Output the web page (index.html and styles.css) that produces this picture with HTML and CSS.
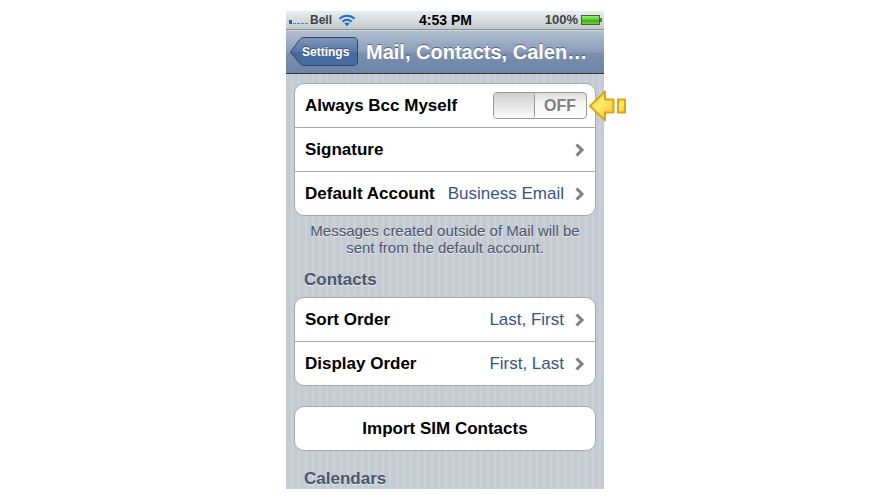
FILE: index.html
```
<!DOCTYPE html>
<html lang="en">
<head>
    <meta charset="UTF-8">
    <meta name="viewport" content="width=device-width, initial-scale=1.0">
    <title>Mail, Contacts, Calendars</title>
    <link rel="stylesheet" href="styles.css">
</head>
<body>
    <div class="phone">
        <div class="status-bar">
            <div class="carrier">
                <svg class="signal" width="20" height="6" viewBox="0 0 20 6">
                    <rect x="0" y="1" width="3" height="4" fill="#1c66c4"/>
                    <path d="M4 4.500h3M8 4.500h3M12 4.500h3M16 4.500h3" stroke="#4a86cc" stroke-width="1"/>
                </svg>
                <span>Bell</span>
                <svg class="wifi" width="18" height="13" viewBox="0 0 18 13" fill="none" stroke="#1b6fd0" stroke-width="2">
                    <path d="M1.500 4.800C5.500 0.600 12.500 0.600 16.500 4.800"/>
                    <path d="M4.500 7.700C7 5.200 11 5.200 13.500 7.700"/>
                    <path d="M6.500 9.500C8 8.300 10 8.300 11.500 9.500L9 12.200Z" fill="#1b6fd0" stroke="none"/>
                </svg>
            </div>
            <time class="clock">4:53 PM</time>
            <div class="battery">
                <span>100%</span>
                <svg width="21" height="10" viewBox="0 0 21 10">
                    <defs>
                        <linearGradient id="charge" x1="0" y1="0" x2="0" y2="1">
                            <stop offset="0" stop-color="#a5ea7c"/>
                            <stop offset="0.45" stop-color="#62d033"/>
                            <stop offset="0.5" stop-color="#38ae12"/>
                            <stop offset="1" stop-color="#6cd335"/>
                        </linearGradient>
                    </defs>
                    <rect x="0.500" y="0.500" width="18" height="9" fill="url(#charge)" stroke="#47643f"/>
                    <rect x="19" y="3" width="2" height="4" fill="#667066"/>
                </svg>
            </div>
        </div>

        <header class="nav-bar">
            <a class="back" href="#settings">
                <svg width="68" height="30" viewBox="0 0 68 30">
                    <defs>
                        <linearGradient id="back-fill" x1="0" y1="0" x2="0" y2="1">
                            <stop offset="0" stop-color="#8298bb"/>
                            <stop offset="0.5" stop-color="#5577a7"/>
                            <stop offset="0.52" stop-color="#446a9f"/>
                            <stop offset="1" stop-color="#4a6d9f"/>
                        </linearGradient>
                    </defs>
                    <path d="M0.500 15L9.500 3Q11.500 0.500 14 0.500H63Q67.500 0.500 67.500 5V24Q67.500 28.500 63 28.500H14Q11.500 28.500 9.500 26Z" fill="url(#back-fill)" stroke="#2e466d"/>
                </svg>
                <span>Settings</span>
            </a>
            <h1>Mail, Contacts, Calen…</h1>
        </header>

        <main>
            <ul class="group">
                <li class="row">
                    <label for="bcc">Always Bcc Myself</label>
                    <label class="switch">
                        <input type="checkbox" id="bcc">
                        <span>OFF</span>
                    </label>
                    <svg class="pointer" width="40" height="34" viewBox="0 0 40 34">
                        <defs>
                            <linearGradient id="gold" x1="0" y1="0" x2="1" y2="1">
                                <stop offset="0" stop-color="#ffce1a"/>
                                <stop offset="0.45" stop-color="#ffec70"/>
                                <stop offset="1" stop-color="#f5b911"/>
                            </linearGradient>
                        </defs>
                        <path d="M2 17L17 2.500V10.500H25.500V23.500H17V31.500Z" fill="url(#gold)" stroke="#dca514" stroke-width="2" stroke-linejoin="round"/>
                        <rect x="30" y="10.500" width="7" height="13" fill="url(#gold)" stroke="#dca514" stroke-width="2"/>
                    </svg>
                </li>
                <li>
                    <a class="row" href="#signature">
                        <span>Signature</span>
                        <svg class="chevron" width="10" height="14" viewBox="0 0 10 14"><path d="M1.500 1.500L7 7L1.500 12.500"/></svg>
                    </a>
                </li>
                <li>
                    <a class="row" href="#account">
                        <span>Default Account</span>
                        <span class="value">Business Email</span>
                        <svg class="chevron" width="10" height="14" viewBox="0 0 10 14"><path d="M1.500 1.500L7 7L1.500 12.500"/></svg>
                    </a>
                </li>
            </ul>
            <p class="note">Messages created outside of Mail will be sent from the default account.</p>

            <h2>Contacts</h2>
            <ul class="group">
                <li>
                    <a class="row" href="#sort">
                        <span>Sort Order</span>
                        <span class="value">Last, First</span>
                        <svg class="chevron" width="10" height="14" viewBox="0 0 10 14"><path d="M1.500 1.500L7 7L1.500 12.500"/></svg>
                    </a>
                </li>
                <li>
                    <a class="row" href="#display">
                        <span>Display Order</span>
                        <span class="value">First, Last</span>
                        <svg class="chevron" width="10" height="14" viewBox="0 0 10 14"><path d="M1.500 1.500L7 7L1.500 12.500"/></svg>
                    </a>
                </li>
            </ul>

            <button class="import" type="button">Import SIM Contacts</button>

            <h2>Calendars</h2>
        </main>
    </div>
</body>
</html>
```
FILE: styles.css
```
* {
    box-sizing: border-box;
}

body {
    margin: 0;
    padding: 11px 10px 11px 11px;
    background: #fff;
    font-family: "Liberation Sans", Arial, sans-serif;
    font-size: 17px;
}

.phone {
    max-width: 318px;
    margin: 0 auto;
    background: repeating-linear-gradient(to right, #c5cbd3 0 5px, #cbd2d8 5px 7px);
}

.status-bar {
    display: grid;
    grid-template-columns: 1fr auto 1fr;
    align-items: center;
    height: 19px;
    padding: 0 2px 0 3px;
    background: linear-gradient(#e9eff0, #c3c9cb);
    border-bottom: 1px solid #8c9094;
    font-size: 13px;
    font-weight: bold;
    line-height: 16px;
    color: #444;
}

.carrier,
.battery {
    display: flex;
    align-items: center;
}

.carrier {
    font-size: 12px;
}

.signal {
    margin: 4px 1px 0 0;
}

.wifi {
    margin-left: 6px;
}

.clock {
    font-size: 14px;
    color: #000;
}

.battery {
    justify-content: flex-end;
    gap: 3px;
    font-size: 13px;
}

.nav-bar {
    display: flex;
    align-items: center;
    height: 44px;
    padding: 0 4px;
    gap: 8px;
    background: linear-gradient(#b2bfd0, #8a9cb8 50%, #7c90b0 52%, #6d84a6);
    border-top: 1px solid #cdd5df;
    border-bottom: 1px solid #2d3642;
    color: #fff;
}

.back {
    display: grid;
    flex: none;
    align-items: center;
    color: #fff;
    font-size: 12px;
    font-weight: bold;
    text-decoration: none;
    text-shadow: 0 -1px 0 #3b5275;
}

.back svg,
.back span {
    grid-area: 1 / 1;
}

.back span {
    padding-left: 12px;
}

h1 {
    flex: 1;
    margin: 0;
    font-size: 20px;
    line-height: 24px;
    white-space: nowrap;
    text-shadow: 0 -1px 0 #55657d;
}

main {
    padding: 9px 8px 0;
}

.group {
    margin: 0;
    padding: 0;
    list-style: none;
    background: #fff;
    border: 1px solid #a7abaf;
    border-radius: 10px;
}

.group li + li {
    border-top: 1px solid #a7abaf;
}

.row {
    position: relative;
    display: flex;
    align-items: center;
    height: 43px;
    padding: 0 10px;
    font-weight: bold;
    line-height: 22px;
    color: #000;
    text-decoration: none;
}

.value {
    margin-left: auto;
    font-weight: normal;
    color: #385487;
}

.chevron {
    margin-left: auto;
    fill: none;
    stroke: #808080;
    stroke-width: 3;
}

.value + .chevron {
    margin-left: 11px;
}

.switch {
    display: flex;
    align-items: center;
    width: 94px;
    height: 27px;
    margin: 0 -2px 0 auto;
    border: 1px solid #999;
    border-radius: 4px;
    background: linear-gradient(#dcdcdc, #f6f6f6 40%, #fff);
    font-size: 16px;
    color: #7f7f7f;
}

.switch input {
    appearance: none;
    width: 41px;
    height: 25px;
    margin: 0 9px 0 0;
    border-right: 1px solid #999;
    border-radius: 3px;
    background: linear-gradient(#cecece, #fbfbfb);
}

/* arrow lies over the edge of the phone */
.pointer {
    position: absolute;
    top: 5px;
    right: -33px;
}

.note {
    margin: 6px 10px 13px;
    font-size: 15px;
    line-height: 17px;
    text-align: center;
    color: #4c566c;
    text-shadow: 0 1px 0 #e3e7eb;
}

h2 {
    margin: 0;
    padding: 0 10px 6px;
    font-size: 17px;
    line-height: 22px;
    color: #4c566c;
    text-shadow: 0 1px 0 #e3e7eb;
}

.import {
    display: block;
    width: 100%;
    height: 45px;
    margin: 20px 0 17px;
    padding: 1px 0 0;
    background: #fff;
    border: 1px solid #a7abaf;
    border-radius: 10px;
    font: bold 17px "Liberation Sans", Arial, sans-serif;
    color: #000;
}

h2:last-child {
    padding-bottom: 0;
    line-height: 21px;
}
```
